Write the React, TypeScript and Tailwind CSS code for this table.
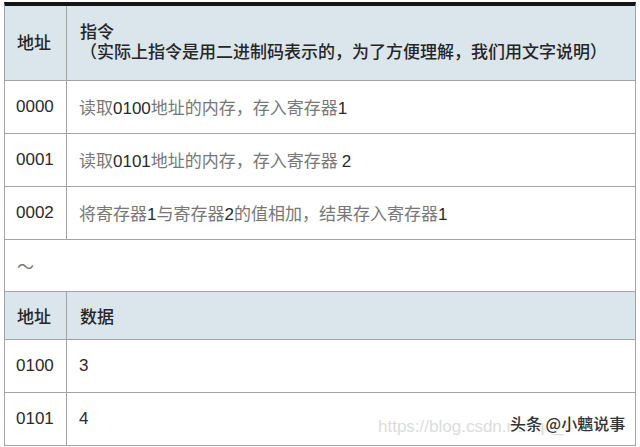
const num = "font-['Liberation_Sans','Noto_Sans_CJK_SC',sans-serif] text-[#2a2a2a]";
const cjk = "font-['Noto_Sans_CJK_SC',sans-serif] text-[#777]";

function Mixed({ text }: { text: string }) {
  // digits in a darker sans face, chinese in grey
  const parts = text.split(/(\d+)/);
  return (
    <span className="text-[17px] leading-none">
      {parts.map((p, i) =>
        /^\d+$/.test(p) ? (
          <span key={i} className={num}>
            {p}
          </span>
        ) : (
          <span key={i} className={cjk}>
            {p}
          </span>
        )
      )}
    </span>
  );
}

const rows1 = [
  { addr: "0000", text: "读取0100地址的内存，存入寄存器1" },
  { addr: "0001", text: "读取0101地址的内存，存入寄存器 2" },
  { addr: "0002", text: "将寄存器1与寄存器2的值相加，结果存入寄存器1" },
];

const rows2 = [
  { addr: "0100", text: "3" },
  { addr: "0101", text: "4" },
];

const head = "font-['Noto_Sans_CJK_SC',serif] text-[17px] font-medium text-[#262626]";

export default function App() {
  return (
    <div className="h-[447px] w-[640px] overflow-hidden bg-white pt-[2px]">
      <div className="relative ml-[4px] w-[632px] border-x border-b border-t-[4px] border-x-[#a3a3a3] border-b-[#a3a3a3] border-t-[#141414]">
        <div className="flex h-[75px] border-b border-[#a3a3a3] bg-[#dbe5ec]">
          <div className={`flex w-[62px] items-center border-r border-[#a3a3a3] pb-[2px] pl-[12px] ${head}`}>
            地址
          </div>
          <div className={`flex flex-col justify-center pb-[4px] pl-[13px] leading-[20px] ${head}`}>
            <span>指令</span>
            <span>（实际上指令是用二进制码表示的，为了方便理解，我们用文字说明）</span>
          </div>
        </div>

        {rows1.map((r) => (
          <div key={r.addr} className="flex h-[53px] border-b border-[#a3a3a3]">
            <div className={`flex w-[62px] items-center border-r border-[#a3a3a3] pl-[11px] text-[17px] ${num}`}>
              {r.addr}
            </div>
            <div className="flex items-center pl-[12px]">
              <Mixed text={r.text} />
            </div>
          </div>
        ))}

        <div className={`flex h-[52px] items-center border-b border-[#a3a3a3] pl-[12px] text-[17px] ${cjk}`}>
          ～
        </div>

        <div className="flex h-[48px] border-b border-[#a3a3a3] bg-[#dbe5ec]">
          <div className={`flex w-[62px] items-center border-r border-[#a3a3a3] pl-[12px] ${head}`}>
            地址
          </div>
          <div className={`flex items-center pl-[13px] ${head}`}>数据</div>
        </div>

        {rows2.map((r, i) => (
          <div
            key={r.addr}
            className={`flex ${i === 0 ? "h-[53px] border-b border-[#a3a3a3]" : "h-[52px]"}`}
          >
            <div className={`flex w-[62px] items-center border-r border-[#a3a3a3] pl-[11px] text-[17px] ${num}`}>
              {r.addr}
            </div>
            <div className={`flex items-center pl-[12px] text-[17px] ${num}`}>{r.text}</div>
          </div>
        ))}

        <div className="pointer-events-none absolute left-[373px] top-[412px] font-['Liberation_Sans',sans-serif] text-[17px] leading-none text-[#dcdcdc]">
          https://blog.csdn.net/qq_4
        </div>
        <div className="pointer-events-none absolute left-[505px] top-[409px] font-['Noto_Sans_CJK_SC',sans-serif] text-[16px] font-medium leading-none text-[#333] [text-shadow:1px_1px_0_#fff,-1px_-1px_0_#fff,1px_-1px_0_#fff,-1px_1px_0_#fff]">
          头条 @小魑说事
        </div>
      </div>
    </div>
  );
}
